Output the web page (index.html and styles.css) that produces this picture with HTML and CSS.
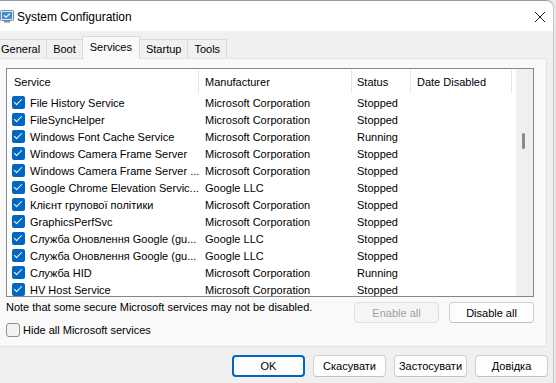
FILE: index.html
```html
<!DOCTYPE html>
<html lang="uk">
<head>
  <meta charset="UTF-8">
  <title>System Configuration</title>
  <link rel="stylesheet" href="styles.css">
</head>
<body>
  <div class="window">
    <div class="titlebar">
      <svg class="app-icon" width="14" height="13" viewBox="0 0 14 13">
        <rect x="0.5" y="0.5" width="13" height="10" rx="1" fill="#dfe6ee" stroke="#7d8a99"/>
        <rect x="2" y="2" width="10" height="7" fill="#3d8fd8"/>
        <path d="M4 5.5 L6 7.3 L10 3.6" fill="none" stroke="#fff" stroke-width="1.2"/>
        <rect x="4" y="11" width="6" height="1.5" fill="#7d8a99"/>
      </svg>
      <span class="title">System Configuration</span>
      <svg class="close" width="12" height="12" viewBox="0 0 12 12">
        <path d="M1 1 L11 11 M11 1 L1 11" stroke="#1a1a1a" stroke-width="1"/>
      </svg>
    </div>

    <div class="tabs">
      <div class="tab first">General</div>
      <div class="tab">Boot</div>
      <div class="tab active">Services</div>
      <div class="tab">Startup</div>
      <div class="tab">Tools</div>
    </div>

    <div class="panel">
      <div class="listbox">
        <div class="list">
          <div class="row head">
            <div class="cell c1">Service</div>
            <div class="cell c2">Manufacturer</div>
            <div class="cell c3">Status</div>
            <div class="cell c4">Date Disabled</div>
          </div>
          <div class="rows">
            <div class="row">
              <div class="cell c1"><span class="check"></span><span class="name">File History Service</span></div>
              <div class="cell c2">Microsoft Corporation</div>
              <div class="cell c3">Stopped</div>
              <div class="cell c4"></div>
            </div>
            <div class="row">
              <div class="cell c1"><span class="check"></span><span class="name">FileSyncHelper</span></div>
              <div class="cell c2">Microsoft Corporation</div>
              <div class="cell c3">Stopped</div>
              <div class="cell c4"></div>
            </div>
            <div class="row">
              <div class="cell c1"><span class="check"></span><span class="name">Windows Font Cache Service</span></div>
              <div class="cell c2">Microsoft Corporation</div>
              <div class="cell c3">Running</div>
              <div class="cell c4"></div>
            </div>
            <div class="row">
              <div class="cell c1"><span class="check"></span><span class="name">Windows Camera Frame Server</span></div>
              <div class="cell c2">Microsoft Corporation</div>
              <div class="cell c3">Stopped</div>
              <div class="cell c4"></div>
            </div>
            <div class="row">
              <div class="cell c1"><span class="check"></span><span class="name">Windows Camera Frame Server ...</span></div>
              <div class="cell c2">Microsoft Corporation</div>
              <div class="cell c3">Stopped</div>
              <div class="cell c4"></div>
            </div>
            <div class="row">
              <div class="cell c1"><span class="check"></span><span class="name">Google Chrome Elevation Servic...</span></div>
              <div class="cell c2">Google LLC</div>
              <div class="cell c3">Stopped</div>
              <div class="cell c4"></div>
            </div>
            <div class="row">
              <div class="cell c1"><span class="check"></span><span class="name">Клієнт групової політики</span></div>
              <div class="cell c2">Microsoft Corporation</div>
              <div class="cell c3">Stopped</div>
              <div class="cell c4"></div>
            </div>
            <div class="row">
              <div class="cell c1"><span class="check"></span><span class="name">GraphicsPerfSvc</span></div>
              <div class="cell c2">Microsoft Corporation</div>
              <div class="cell c3">Stopped</div>
              <div class="cell c4"></div>
            </div>
            <div class="row">
              <div class="cell c1"><span class="check"></span><span class="name">Служба Оновлення Google (gu...</span></div>
              <div class="cell c2">Google LLC</div>
              <div class="cell c3">Stopped</div>
              <div class="cell c4"></div>
            </div>
            <div class="row">
              <div class="cell c1"><span class="check"></span><span class="name">Служба Оновлення Google (gu...</span></div>
              <div class="cell c2">Google LLC</div>
              <div class="cell c3">Stopped</div>
              <div class="cell c4"></div>
            </div>
            <div class="row">
              <div class="cell c1"><span class="check"></span><span class="name">Служба HID</span></div>
              <div class="cell c2">Microsoft Corporation</div>
              <div class="cell c3">Running</div>
              <div class="cell c4"></div>
            </div>
            <div class="row">
              <div class="cell c1"><span class="check"></span><span class="name">HV Host Service</span></div>
              <div class="cell c2">Microsoft Corporation</div>
              <div class="cell c3">Stopped</div>
              <div class="cell c4"></div>
            </div>
          </div>
        </div>
        <div class="scrollbar"><div class="thumb"></div></div>
      </div>

      <div class="note-row">
        <span class="note">Note that some secure Microsoft services may not be disabled.</span>
        <button class="btn small" disabled>Enable all</button>
        <button class="btn small">Disable all</button>
      </div>

      <label class="hide-row">
        <span class="box"></span>
        Hide all Microsoft services
      </label>
    </div>

    <div class="footer">
      <button class="btn big default">OK</button>
      <button class="btn big">Скасувати</button>
      <button class="btn big">Застосувати</button>
      <button class="btn big">Довідка</button>
    </div>
  </div>
</body>
</html>
```

FILE: styles.css
```css
body {
  margin: 0;
  width: 556px;
  height: 383px;
  overflow: hidden;
  background-color: #e9e9e9;
  font-family: "Liberation Sans", Arial, sans-serif;
  font-size: 11px;
  color: #000;
}

.window {
  width: 554px;
  height: 383px;
  box-sizing: border-box;
  background-color: #f0f0f0;
  border-top: 1px solid #9a9a9a;
  border-right: 1px solid #c4c4c4;
  border-top-right-radius: 8px;
  overflow: hidden;
}

/* title bar */
.titlebar {
  height: 30px;
  background: white;
  display: flex;
  align-items: center;
}

.app-icon {
  margin: 1px 3px 0 0;
}

.title {
  font-size: 12px;
  flex: 1;
  margin-top: 1px;
}

.close {
  margin-right: 7px;
  margin-top: 1px;
}

/* tabs */
.tabs {
  display: flex;
  align-items: flex-end;
  height: 27px;
}

.tab {
  height: 18px;
  line-height: 18px;
  padding: 0 6px;
  border: 1px solid #dadada;
  border-bottom: none;
  margin-right: -1px;
  background-color: #f0f0f0;
}

.tab.first {
  padding-left: 1px;
  border-left: none;
}

.tab.active {
  height: 22px;
  line-height: 20px;
  background-color: #f9f9f9;
  margin-bottom: -1px;
  position: relative;
  z-index: 1;
  padding: 0 7px;
}

/* panel */
.panel {
  width: 547px;
  height: 289px;
  box-sizing: border-box;
  border: 1px solid #e3e3e3;
  border-left: none;
  background-color: #f9f9f9;
  padding: 9px 0 0 6px;
}

.listbox {
  width: 528px;
  height: 229px;
  box-sizing: border-box;
  border: 1px solid #828790;
  background: white;
  display: flex;
  overflow: hidden;
}

.list {
  width: 509px;
}

.row {
  display: flex;
  height: 17px;
  align-items: center;
  white-space: nowrap;
}

.row.head {
  height: 25px;
  align-items: flex-start;
}

.cell {
  box-sizing: border-box;
  overflow: hidden;
}

.c1 { width: 192px; padding-left: 5px; display: flex; align-items: center; }
.c2 { width: 153px; padding-left: 6px; }
.c3 { width: 59px; padding-left: 5px; }
.c4 { width: 101px; padding-left: 6px; }

.head .cell {
  display: block;
  height: 23px;
  margin-top: 1px;
  padding-top: 6px;
  border-right: 1px solid #e5e5e5;
}

.head .c1 { padding-left: 7px; }

.check {
  flex: none;
  width: 13px;
  height: 13px;
  margin-right: 5px;
  border-radius: 2px;
  background-color: #0067c0;
  position: relative;
}

.check::after {
  content: "";
  position: absolute;
  left: 4px;
  top: 1px;
  width: 3px;
  height: 7px;
  border: solid white;
  border-width: 0 1.5px 1.5px 0;
  transform: rotate(45deg);
}

.scrollbar {
  width: 17px;
  margin-left: auto;
  background-color: #efefef;
  padding-top: 64px;
  box-sizing: border-box;
}

.thumb {
  width: 3px;
  height: 16px;
  margin-left: 6px;
  border-radius: 2px;
  background-color: #8a8a8a;
}

/* below the list */
.note-row {
  display: flex;
  align-items: center;
  margin-top: 5px;
  width: 528px;
}

.note {
  flex: 1;
  margin-top: -11px;
}

.btn {
  font-family: inherit;
  font-size: 11px;
  color: #000;
  background-color: #fdfdfd;
  border: 1px solid #d0d0d0;
  border-bottom-color: #c2c2c2;
  border-radius: 4px;
  padding: 0;
}

.btn.small {
  width: 85px;
  height: 21px;
  margin-left: 10px;
}

.btn.small:disabled {
  color: #a0a0a0;
  background-color: #f5f5f5;
  border-color: #e0e0e0;
}

.hide-row {
  display: flex;
  align-items: center;
  margin-top: 0;
}

.box {
  width: 12px;
  height: 12px;
  border: 1px solid #8f8f8f;
  border-radius: 3px;
  background-color: #f3f3f3;
  margin-right: 3px;
}

.footer {
  display: flex;
  justify-content: flex-end;
  gap: 8px;
  padding: 8px 5px 0 0;
}

.btn.big {
  width: 73px;
  height: 22px;
}

.btn.default {
  border: 2px solid #0067c0;
}
```
